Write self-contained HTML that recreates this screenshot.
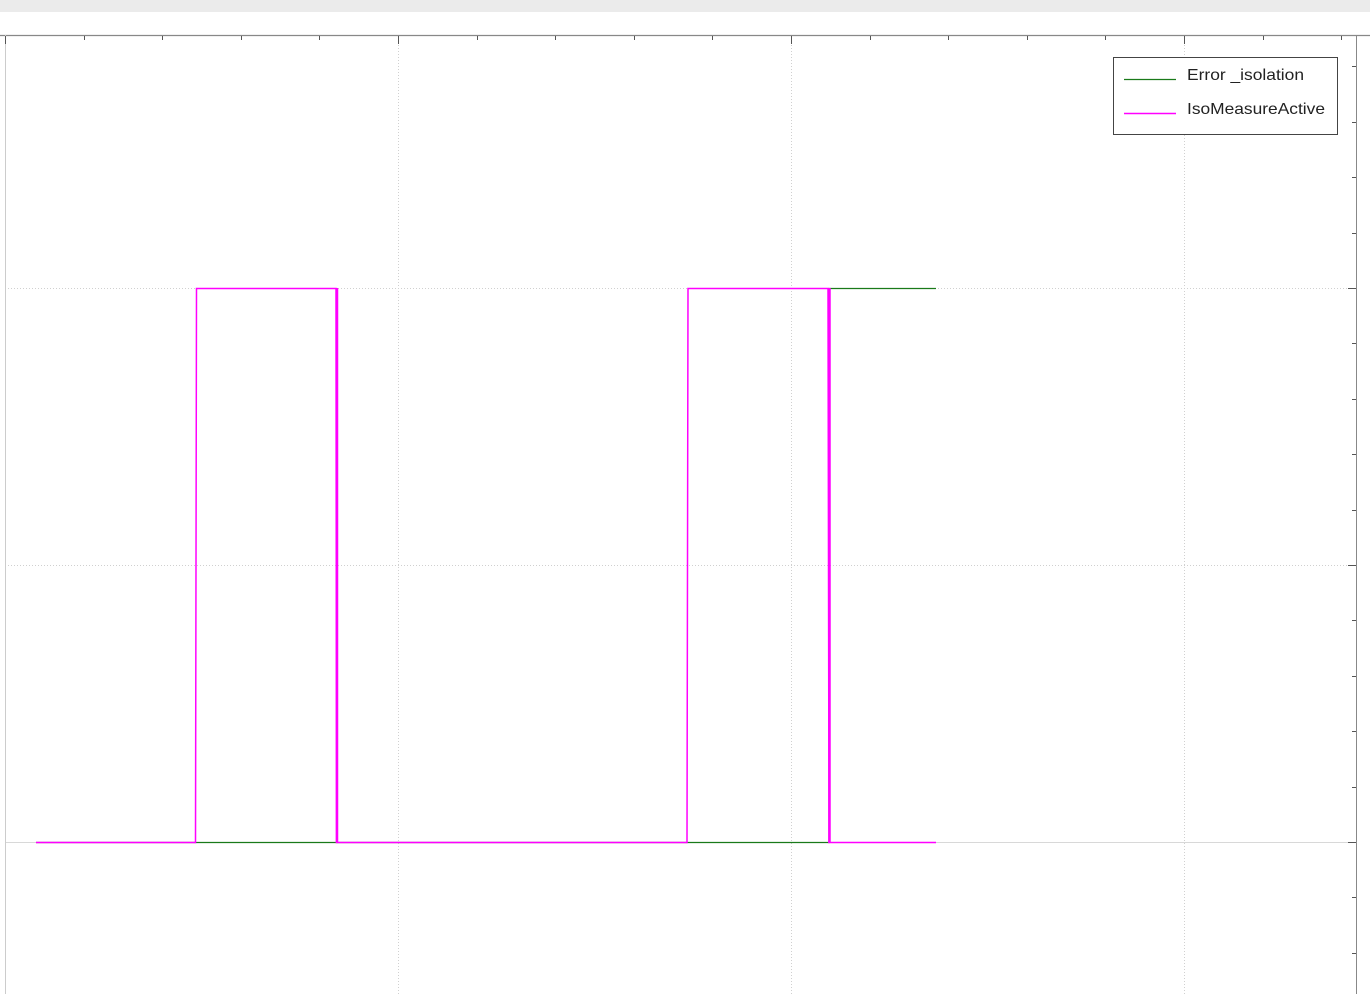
<!DOCTYPE html>
<html><head><style>body{margin:0;background:#fff;width:1370px;height:994px;overflow:hidden}</style></head><body>
<svg width="1370" height="994" xmlns="http://www.w3.org/2000/svg" style="position:absolute;left:0;top:0">
<rect x="0" y="0" width="1370" height="12" fill="#ebebeb"/>
<g stroke="#d0d0d0" stroke-width="1" stroke-dasharray="1,2">
<line x1="398.5" y1="36" x2="398.5" y2="994"/>
<line x1="791.5" y1="36" x2="791.5" y2="994"/>
<line x1="1184.5" y1="36" x2="1184.5" y2="994"/>
<line x1="5" y1="288.5" x2="1356" y2="288.5"/>
<line x1="5" y1="565.5" x2="1356" y2="565.5"/>
</g>
<line x1="5" y1="842.5" x2="1356" y2="842.5" stroke="#d8d8d8"/>
<g stroke="#555" stroke-width="1">
<line x1="0" y1="35.5" x2="1370" y2="35.5" stroke="#888" stroke-width="1.2"/>
<line x1="5.5" y1="35" x2="5.5" y2="994" stroke="#ccc"/>
<line x1="1356.5" y1="35" x2="1356.5" y2="994" stroke="#888"/>
<line x1="5.5" y1="36" x2="5.5" y2="44"/>
<line x1="84.5" y1="36" x2="84.5" y2="40"/><line x1="162.5" y1="36" x2="162.5" y2="40"/>
<line x1="241.5" y1="36" x2="241.5" y2="40"/><line x1="319.5" y1="36" x2="319.5" y2="40"/>
<line x1="398.5" y1="36" x2="398.5" y2="44"/>
<line x1="477.5" y1="36" x2="477.5" y2="40"/><line x1="555.5" y1="36" x2="555.5" y2="40"/>
<line x1="634.5" y1="36" x2="634.5" y2="40"/><line x1="712.5" y1="36" x2="712.5" y2="40"/>
<line x1="791.5" y1="36" x2="791.5" y2="44"/>
<line x1="870.5" y1="36" x2="870.5" y2="40"/><line x1="948.5" y1="36" x2="948.5" y2="40"/>
<line x1="1027.5" y1="36" x2="1027.5" y2="40"/><line x1="1105.5" y1="36" x2="1105.5" y2="40"/>
<line x1="1184.5" y1="36" x2="1184.5" y2="44"/>
<line x1="1263.5" y1="36" x2="1263.5" y2="40"/><line x1="1341.5" y1="36" x2="1341.5" y2="40"/>
<line x1="1352" y1="66.5" x2="1356" y2="66.5"/><line x1="1352" y1="122.5" x2="1356" y2="122.5"/>
<line x1="1352" y1="177.5" x2="1356" y2="177.5"/><line x1="1352" y1="233.5" x2="1356" y2="233.5"/>
<line x1="1348" y1="288.5" x2="1356" y2="288.5"/>
<line x1="1352" y1="343.5" x2="1356" y2="343.5"/><line x1="1352" y1="399.5" x2="1356" y2="399.5"/>
<line x1="1352" y1="454.5" x2="1356" y2="454.5"/><line x1="1352" y1="510.5" x2="1356" y2="510.5"/>
<line x1="1348" y1="565.5" x2="1356" y2="565.5"/>
<line x1="1352" y1="620.5" x2="1356" y2="620.5"/><line x1="1352" y1="676.5" x2="1356" y2="676.5"/>
<line x1="1352" y1="731.5" x2="1356" y2="731.5"/><line x1="1352" y1="787.5" x2="1356" y2="787.5"/>
<line x1="1348" y1="842.5" x2="1356" y2="842.5"/>
<line x1="1352" y1="897.5" x2="1356" y2="897.5"/><line x1="1352" y1="953.5" x2="1356" y2="953.5"/>
</g>
<polyline fill="none" stroke="#1a7a1a" stroke-width="1.2" points="36,842.5 829,842.5 829,288.5 936,288.5"/>
<polyline fill="none" stroke="#ff00ff" stroke-width="1.5" points="36,842.5 195.5,842.5 196.5,288.5 336,288.5 336.5,842.5 687,842.5 688,288.5 828,288.5 829,842.5 936,842.5"/>
<line x1="337" y1="288" x2="337" y2="843" stroke="#ff00ff" stroke-width="2.5"/>
<line x1="829.5" y1="288" x2="829.5" y2="843" stroke="#ff00ff" stroke-width="2.5"/>
<rect x="1113.5" y="57.5" width="224" height="77" fill="#fff" stroke="#444"/>
<line x1="1124" y1="79.5" x2="1176" y2="79.5" stroke="#1a7a1a" stroke-width="1.2"/>
<line x1="1124" y1="113.5" x2="1176" y2="113.5" stroke="#ff00ff" stroke-width="1.5"/>
<text x="1187" y="80" font-family="Liberation Sans, sans-serif" font-size="16" fill="#222" textLength="117" lengthAdjust="spacingAndGlyphs">Error _isolation</text>
<text x="1187" y="114" font-family="Liberation Sans, sans-serif" font-size="16" fill="#222" textLength="138" lengthAdjust="spacingAndGlyphs">IsoMeasureActive</text>
</svg>
</body></html>
